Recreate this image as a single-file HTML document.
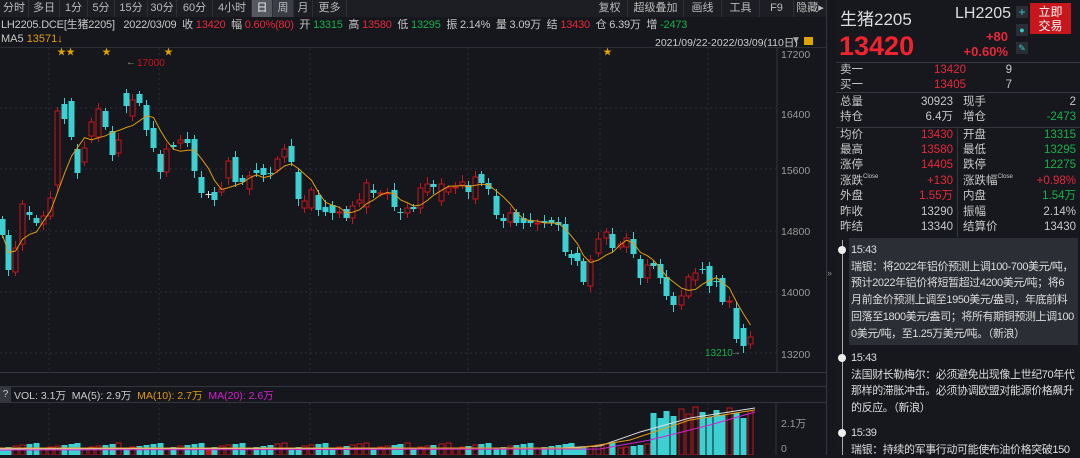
<!DOCTYPE html>
<html><head><meta charset="utf-8">
<style>
*{margin:0;padding:0;box-sizing:border-box}
body{width:1080px;height:455px;overflow:hidden;background:#15171c;font-family:"Liberation Sans","Noto Sans CJK SC",sans-serif;color:#c8c8c8;position:relative}
.abs{position:absolute;white-space:nowrap}
.tb{position:absolute;top:0;left:0;width:826px;height:17px;background:#1c1e23;font-size:11px;color:#bbb}
.tb span{position:absolute;top:0;height:17px;line-height:17px;text-align:center;border-right:1px solid #2c2f35}
.r{color:#e8283a}.g{color:#19b04b}.o{color:#e39a16}.m{color:#d520d0}
#rp{position:absolute;left:834px;top:0;width:246px;height:455px;background:#16181d}
.row{position:absolute;left:840px;width:236px;height:15px;font-size:11.5px;line-height:15px}
.row b{font-weight:normal;position:absolute;top:0}
sup{font-size:6px;line-height:0;vertical-align:6px}
.news{position:absolute;left:851px;font-size:11px;line-height:16.7px;color:#ddd;white-space:nowrap;letter-spacing:-0.4px}
</style></head><body>
<div class="tb">
<span style="left:0;width:29px">分时</span><span style="left:29px;width:31px">多日</span><span style="left:60px;width:28px">1分</span><span style="left:88px;width:27px">5分</span><span style="left:115px;width:33px">15分</span><span style="left:148px;width:29px">30分</span><span style="left:177px;width:36px">60分</span><span style="left:213px;width:39px">4小时</span><span style="left:252px;width:21px;background:#55585f;color:#eee">日</span><span style="left:273px;width:21px;background:#3a3d44">周</span><span style="left:294px;width:19px">月</span><span style="left:313px;width:34px">更多</span>
<span style="left:592px;width:36px">复权</span><span style="left:628px;width:56px">超级叠加</span><span style="left:684px;width:38px">画线</span><span style="left:722px;width:38px">工具</span><span style="left:760px;width:34px">F9</span><span style="left:794px;width:32px;border:none">隐藏▸</span>
</div>
<div class="abs" style="left:1px;top:18px;font-size:11px;line-height:14px;letter-spacing:-0.2px">LH2205.DCE[生猪2205] &nbsp; 2022/03/09 &nbsp;收 <span class="r">13420</span> &nbsp;幅 <span class="r">0.60%(80)</span> &nbsp;开 <span class="g">13315</span> &nbsp;高 <span class="r">13580</span> &nbsp;低 <span class="g">13295</span> &nbsp;振 2.14% &nbsp;量 3.09万 &nbsp;结 <span class="r">13430</span> &nbsp;仓 6.39万 &nbsp;增 <span class="g">-2473</span></div>
<div class="abs" style="left:1px;top:33px;font-size:11px">MA5 <span class="o">13571↓</span></div>
<div class="abs" style="left:655px;top:35px;font-size:10.5px;text-decoration:underline;color:#ccc">2021/09/22-2022/03/09(110日)</div>
<div class="abs" style="left:791px;top:35px;font-size:10px;color:#aaa">▼</div>
<div class="abs" style="left:804px;top:37px;width:9px;height:8px;background:#e0a400"></div>
<div class="abs" style="left:0;top:47px;width:826px;height:1px;background:#2a2d33"></div>
<div class="abs" style="left:826px;top:0;width:1px;height:455px;background:#34373d"></div>
<div class="abs" style="left:827px;top:268px;width:6px;height:30px;color:#888;font-size:9px">»</div>
<svg id="ch" class="abs" style="left:0;top:0" width="826" height="455"></svg>
<div class="abs" style="left:0;top:372px;width:826px;height:1px;background:#33363c"></div>
<div class="abs" style="left:0;top:386px;width:826px;height:1px;background:#33363c"></div>
<div class="abs" style="left:0;top:402px;width:826px;height:1px;background:#33363c"></div>
<div class="abs" style="left:0;top:387px;width:11px;height:15px;background:#34373d;font-size:10px;text-align:center;line-height:15px">?</div>
<div class="abs" style="left:14px;top:388px;font-size:10.5px;color:#ccc">VOL: 3.1万 &nbsp;MA(5): 2.9万 &nbsp;<span class="o">MA(10): 2.7万</span> &nbsp;<span class="m">MA(20): 2.6万</span></div>
<div id="rp"></div>
<div class="abs" style="left:840px;top:5px;font-size:17px;color:#ddd">生猪2205</div>
<div class="abs" style="left:955px;top:5px;font-size:16px;color:#ddd">LH2205</div>
<div class="abs" style="left:1016px;top:6px;width:12px;height:12px;background:#2a2d33;color:#3cc;font-size:12px;line-height:12px;text-align:center">+</div>
<div class="abs" style="left:1016px;top:24px;width:12px;height:12px;background:#2a2d33;color:#3cc;font-size:9px;line-height:12px;text-align:center">●</div>
<div class="abs" style="left:1016px;top:42px;width:12px;height:12px;background:#2a2d33;color:#3cc;font-size:9px;line-height:12px;text-align:center">✎</div>
<div class="abs" style="left:1030px;top:3px;width:41px;height:31px;background:#c8161d;color:#fff;font-size:12px;line-height:14px;text-align:center;padding-top:2px">立即<br>交易</div>
<div class="abs r" style="left:839px;top:31px;font-size:27px;font-weight:bold;color:#f2232f">13420</div>
<div class="abs r" style="left:960px;top:29px;width:48px;text-align:right;font-size:13px;font-weight:bold;line-height:15px">+80<br>+0.60%</div>
<div class="abs" style="left:836px;top:62px;width:244px;height:1px;background:#34373d"></div>
<div class="abs" style="left:836px;top:92px;width:244px;height:1px;background:#34373d"></div>
<div class="abs" style="left:836px;top:127px;width:244px;height:1px;background:#34373d"></div>
<div class="abs" style="left:957px;top:127px;width:1px;height:110px;background:#34373d"></div>
<div id="tbl"></div>
<div class="abs" style="left:849px;top:238px;width:229px;height:107px;background:#2b2e34"></div>
<div class="abs" style="left:842px;top:240px;width:1px;height:215px;background:#aaa"></div>
<div class="abs" style="left:838px;top:246px;width:8px;height:8px;border-radius:50%;background:#eee"></div>
<div class="abs" style="left:838px;top:354px;width:8px;height:8px;border-radius:50%;background:#eee"></div>
<div class="abs" style="left:838px;top:429px;width:8px;height:8px;border-radius:50%;background:#eee"></div>
<div class="news" style="top:242px">15:43<br>瑞银：将2022年铝价预测上调100-700美元/吨，<br>预计2022年铝价将短暂超过4200美元/吨；将6<br>月前金价预测上调至1950美元/盎司，年底前料<br>回落至1800美元/盎司；将所有期铜预测上调100<br>0美元/吨，至1.25万美元/吨。（新浪）</div>
<div class="news" style="top:350px">15:43<br>法国财长勒梅尔：必须避免出现像上世纪70年代<br>那样的滞胀冲击。必须协调欧盟对能源价格飙升<br>的反应。（新浪）</div>
<div class="news" style="top:425px">15:39<br>瑞银：持续的军事行动可能使布油价格突破150</div>
<script>
var rows=[["卖一","13420","r","","9",""],["买一","13405","r","","7",""],["总量","30923","","现手","2",""],["持仓","6.4万","","增仓","-2473","g"],["均价","13430","r","开盘","13315","g"],["最高","13580","r","最低","13295","g"],["涨停","14405","r","跌停","12275","g"],["涨跌<sup>Close</sup>","+130","r","涨跌幅<sup>Close</sup>","+0.98%","r"],["外盘","1.55万","r","内盘","1.54万","g"],["昨收","13290","","振幅","2.14%",""],["昨结","13340","","结算价","13430",""]];
var ys=[62,77,94,109,127,142,157,173,188,204,219];var h="";
rows.forEach(function(r,i){var y=ys[i]+1;
h+='<div class="row" style="top:'+y+'px"><b style="left:0">'+r[0]+'</b><b class="'+r[2]+'" style="right:'+(i<2?110:123)+'px">'+r[1]+'</b>'+(r[3]?'<b style="left:123px">'+r[3]+'</b>':'')+'<b class="'+r[5]+'" style="right:'+(i<2?64:0)+'px">'+r[4]+'</b></div>';});
document.getElementById('tbl').innerHTML=h;
var c=[[2,219,235,'c'],[8,235,270,'c'],[15,248,272,'r'],[22,204,244,'r'],[29,212,215,'c'],[36,218,223,'c'],[43,216,224,'r'],[50,198,216,'r'],[57,111,185,'r'],[64,104,119,'c'],[71,101,137,'c'],[77,149,173,'c'],[84,148,162,'r'],[91,122,136,'r'],[98,109,137,'r'],[105,111,127,'c'],[112,131,155,'c'],[118,140,153,'r'],[126,93,106,'c'],[132,100,116,'r'],[139,94,103,'c'],[146,105,130,'c'],[153,128,148,'c'],[160,154,172,'c'],[166,149,172,'r'],[173,145,147,'c'],[180,140,143,'r'],[187,139,143,'c'],[194,139,171,'c'],[201,177,193,'c'],[208,194,195,'w'],[214,192,200,'c'],[221,189,192,'r'],[228,161,178,'r'],[235,157,182,'c'],[242,178,182,'c'],[249,176,189,'r'],[256,170,173,'c'],[263,168,175,'c'],[270,173,174,'c'],[277,159,170,'r'],[284,149,157,'r'],[291,146,162,'c'],[298,172,199,'c'],[304,201,208,'r'],[311,190,208,'r'],[318,195,210,'c'],[325,207,212,'c'],[332,205,213,'c'],[339,212,213,'r'],[346,209,218,'c'],[352,206,218,'r'],[359,200,203,'r'],[366,183,207,'r'],[373,190,193,'c'],[380,193,194,'r'],[387,193,194,'r'],[394,190,207,'c'],[400,212,213,'c'],[407,208,213,'r'],[413,207,209,'c'],[420,188,208,'r'],[427,184,192,'r'],[433,184,187,'c'],[441,184,201,'r'],[448,188,192,'r'],[455,187,188,'r'],[462,182,185,'r'],[468,185,192,'c'],[475,177,199,'r'],[481,174,183,'c'],[488,183,189,'c'],[496,196,215,'c'],[503,218,221,'c'],[510,213,222,'r'],[516,212,223,'c'],[523,218,223,'c'],[530,220,223,'c'],[537,223,224,'r'],[544,221,223,'c'],[551,220,223,'c'],[558,222,225,'c'],[565,224,252,'c'],[571,254,258,'c'],[577,253,261,'c'],[583,261,282,'c'],[590,260,286,'r'],[598,239,253,'r'],[606,232,238,'r'],[612,234,248,'c'],[620,244,247,'r'],[626,238,247,'r'],[633,239,254,'c'],[640,259,278,'c'],[647,265,278,'r'],[653,263,266,'c'],[660,264,278,'c'],[666,277,296,'c'],[673,296,305,'c'],[681,296,305,'r'],[688,277,296,'r'],[695,273,280,'r'],[702,269,270,'c'],[709,266,286,'c'],[716,281,282,'c'],[722,278,302,'c'],[729,301,302,'r'],[736,308,339,'c'],[743,328,346,'c'],[750,337,344,'r']];
var s='';
[108,169,231,292,353].forEach(function(y){s+='<line x1="0" x2="776" y1="'+y+'" y2="'+y+'" stroke="#2c2f35" stroke-dasharray="2,3"/>';});
[49,159,310,468,600,708].forEach(function(x){s+='<line x1="'+x+'" x2="'+x+'" y1="48" y2="372" stroke="#2a2d33" stroke-dasharray="2,3"/><line x1="'+x+'" x2="'+x+'" y1="403" y2="455" stroke="#2a2d33" stroke-dasharray="2,3"/>';});
s+='<line x1="777" x2="777" y1="48" y2="372" stroke="#33363c"/><line x1="776" x2="776" y1="403" y2="455" stroke="#33363c"/>';
[[17200,54],[16400,114],[15600,170],[14800,231],[14000,292],[13200,354]].forEach(function(a){s+='<text x="781" y="'+(a[1]+4)+'" fill="#999" font-size="10.5" font-family="Liberation Sans">'+a[0]+'</text>';});
s+='<text x="781" y="427" fill="#999" font-size="10.5" font-family="Liberation Sans,Noto Sans CJK SC">2.1万</text><text x="781" y="452" fill="#999" font-size="10.5" font-family="Liberation Sans">0</text>';
var cl=[];
c.forEach(function(k,i){var x=k[0],t=k[1],b=k[2],col=k[3]=='c'?'#3cd0d2':k[3]=='r'?'#c8141c':'#ddd';
var wt=t-3-(i*7%5),wb=b+3+(i*3%5);
s+='<line x1="'+(x+.5)+'" x2="'+(x+.5)+'" y1="'+wt+'" y2="'+wb+'" stroke="'+col+'"/>';
if(k[3]=='r')s+='<rect x="'+(x-2)+'" y="'+t+'" width="5" height="'+Math.max(1,b-t)+'" fill="#15171c" stroke="'+col+'"/>';
else s+='<rect x="'+(x-2.5)+'" y="'+t+'" width="6" height="'+Math.max(1,b-t)+'" fill="'+col+'"/>';
cl.push(k[3]=='r'?t:b);
var v=i<95?(448-(i*13%6)):(418-(i*7%12));var vc=k[3]=='c'?'#3cd0d2':'#c8141c';
if(k[3]=='r')s+='<rect x="'+(x-2)+'" y="'+v+'" width="5" height="'+(455-v)+'" fill="none" stroke="'+vc+'"/>';else s+='<rect x="'+(x-2.5)+'" y="'+v+'" width="6" height="'+(455-v)+'" fill="'+vc+'"/>';
});
var p='';cl.forEach(function(y,i){var a=cl.slice(Math.max(0,i-4),i+1);var m=a.reduce(function(u,w){return u+w},0)/a.length;p+=(i?'L':'M')+(c[i][0]+.5)+' '+m.toFixed(1);});
s+='<path d="'+p+'" fill="none" stroke="#e39a16" stroke-width="1"/>';
s+='<path d="M0 449 L560 448 L600 446 L640 432 L690 418 L755 408" fill="none" stroke="#ddd"/><path d="M0 448 L580 448 L630 440 L690 420 L755 410" fill="none" stroke="#e39a16"/><path d="M0 450 L600 449 L650 440 L710 425 L755 412" fill="none" stroke="#d520d0"/>';
s+='<text x="57" y="55" fill="#e0a400" font-size="9">★★</text><text x="102" y="55" fill="#e0a400" font-size="9">★</text><text x="164" y="55" fill="#e0a400" font-size="9">★</text><text x="603" y="55" fill="#e0a400" font-size="9">★</text>';
s+='<text x="126" y="65" fill="#999" font-size="10">←</text><text x="137" y="66" fill="#c8141c" font-size="10" font-family="Liberation Sans">17000</text>';
s+='<text x="705" y="356" fill="#19b04b" font-size="10" font-family="Liberation Sans">13210</text><text x="731" y="355" fill="#999" font-size="10">→</text>';
document.getElementById('ch').innerHTML=s;
</script>
</body></html>
